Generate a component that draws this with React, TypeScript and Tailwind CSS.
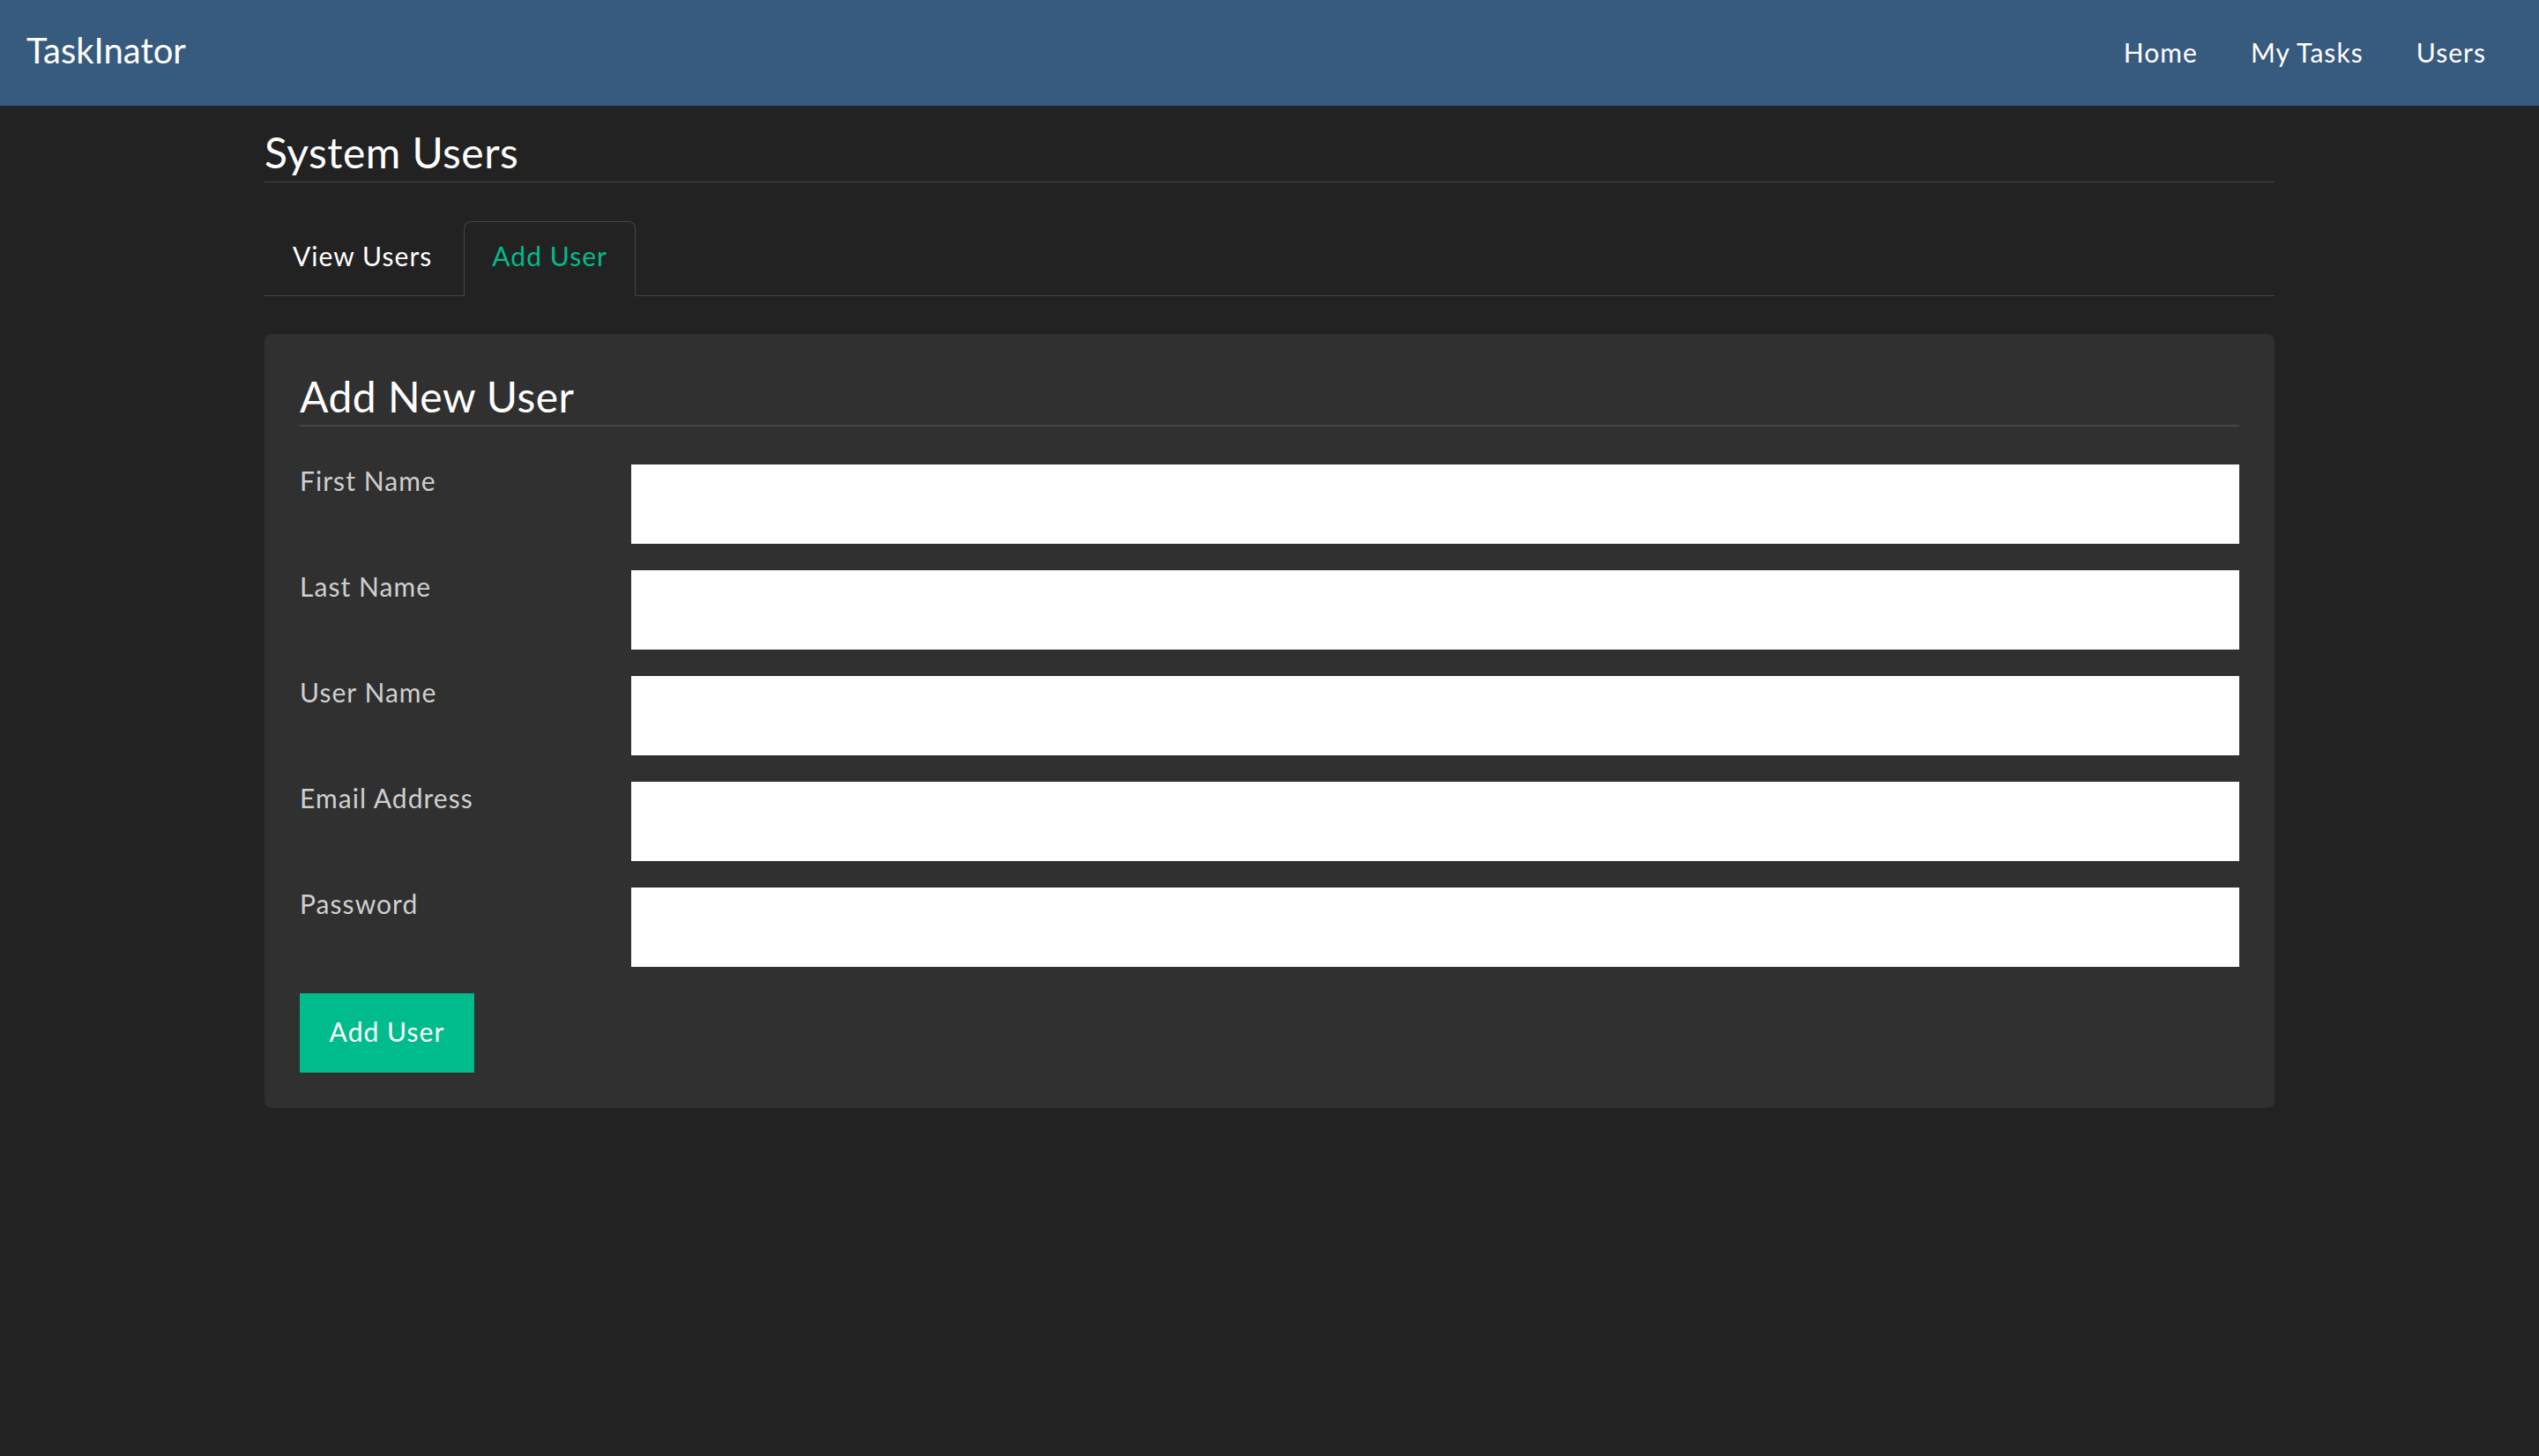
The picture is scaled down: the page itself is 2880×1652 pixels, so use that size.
import React, { useState } from "react";

const fields = [
  { id: "firstName", label: "First Name", type: "text" },
  { id: "lastName", label: "Last Name", type: "text" },
  { id: "userName", label: "User Name", type: "text" },
  { id: "email", label: "Email Address", type: "email" },
  { id: "password", label: "Password", type: "password" },
];

export default function App() {
  const [tab, setTab] = useState<"view" | "add">("add");

  return (
    <div className="min-h-screen bg-[#222222] font-['Lato','Liberation_Sans',sans-serif] text-white">
      <nav className="flex h-[120px] items-center justify-between bg-[#375a7f] pl-[30px] pr-[30px]">
        <a href="#" className="pb-[7px] text-[40px] leading-none">
          TaskInator
        </a>
        <ul className="flex items-center pb-[3px]">
          {["Home", "My Tasks", "Users"].map((item) => (
            <li key={item}>
              <a href="#" className="block px-[30px] text-[30px] leading-[40px] tracking-[0.035em]">
                {item}
              </a>
            </li>
          ))}
        </ul>
      </nav>

      <main className="mx-auto w-[2280px]">
        <h3 className="mt-[26px] border-b border-[#464545] pb-[7px] text-[48px] leading-[53px] tracking-[0.01em]">
          System Users
        </h3>

        <ul className="mt-[44px] flex border-b border-[#464545]">
          <li className="-mb-px mr-[4px]">
            <button
              onClick={() => setTab("view")}
              className={
                "block rounded-t-[8px] border px-[31px] pb-[24px] pt-[17px] text-[30px] leading-[42px] tracking-[0.035em] " +
                (tab === "view"
                  ? "border-[#464545] border-b-transparent bg-[#222222] text-[#00bc8c]"
                  : "border-transparent text-white")
              }
            >
              View Users
            </button>
          </li>
          <li className="-mb-px">
            <button
              onClick={() => setTab("add")}
              className={
                "block rounded-t-[8px] border px-[31px] pb-[24px] pt-[17px] text-[30px] leading-[42px] tracking-[0.035em] " +
                (tab === "add"
                  ? "border-[#464545] border-b-transparent bg-[#222222] text-[#00bc8c]"
                  : "border-transparent text-white")
              }
            >
              Add User
            </button>
          </li>
        </ul>

        <section className="mt-[43px] rounded-[8px] bg-[#303030] px-[40px] pb-[40px] pt-[44px]">
          <h4 className="border-b-2 border-[#464545] pb-[6px] text-[48px] leading-[53px] tracking-[0.01em]">
            Add New User
          </h4>

          <form className="mt-[43px] flex flex-col gap-[30px]" onSubmit={(e) => e.preventDefault()}>
            {fields.map((f) => (
              <div key={f.id} className="flex">
                <label
                  htmlFor={f.id}
                  className="-mt-[2px] w-[376px] shrink-0 text-[30px] leading-[40px] tracking-[0.035em] text-[#cfcfcf]"
                >
                  {f.label}
                </label>
                <input
                  id={f.id}
                  type={f.type}
                  className="h-[90px] flex-1 bg-white px-[24px] text-[30px] text-[#222222] outline-none"
                />
              </div>
            ))}
            <div>
              <button
                type="submit"
                className="h-[90px] w-[198px] bg-[#00bc8c] pb-[3px] text-[30px] tracking-[0.035em] text-white"
              >
                Add User
              </button>
            </div>
          </form>
        </section>
      </main>
    </div>
  );
}
